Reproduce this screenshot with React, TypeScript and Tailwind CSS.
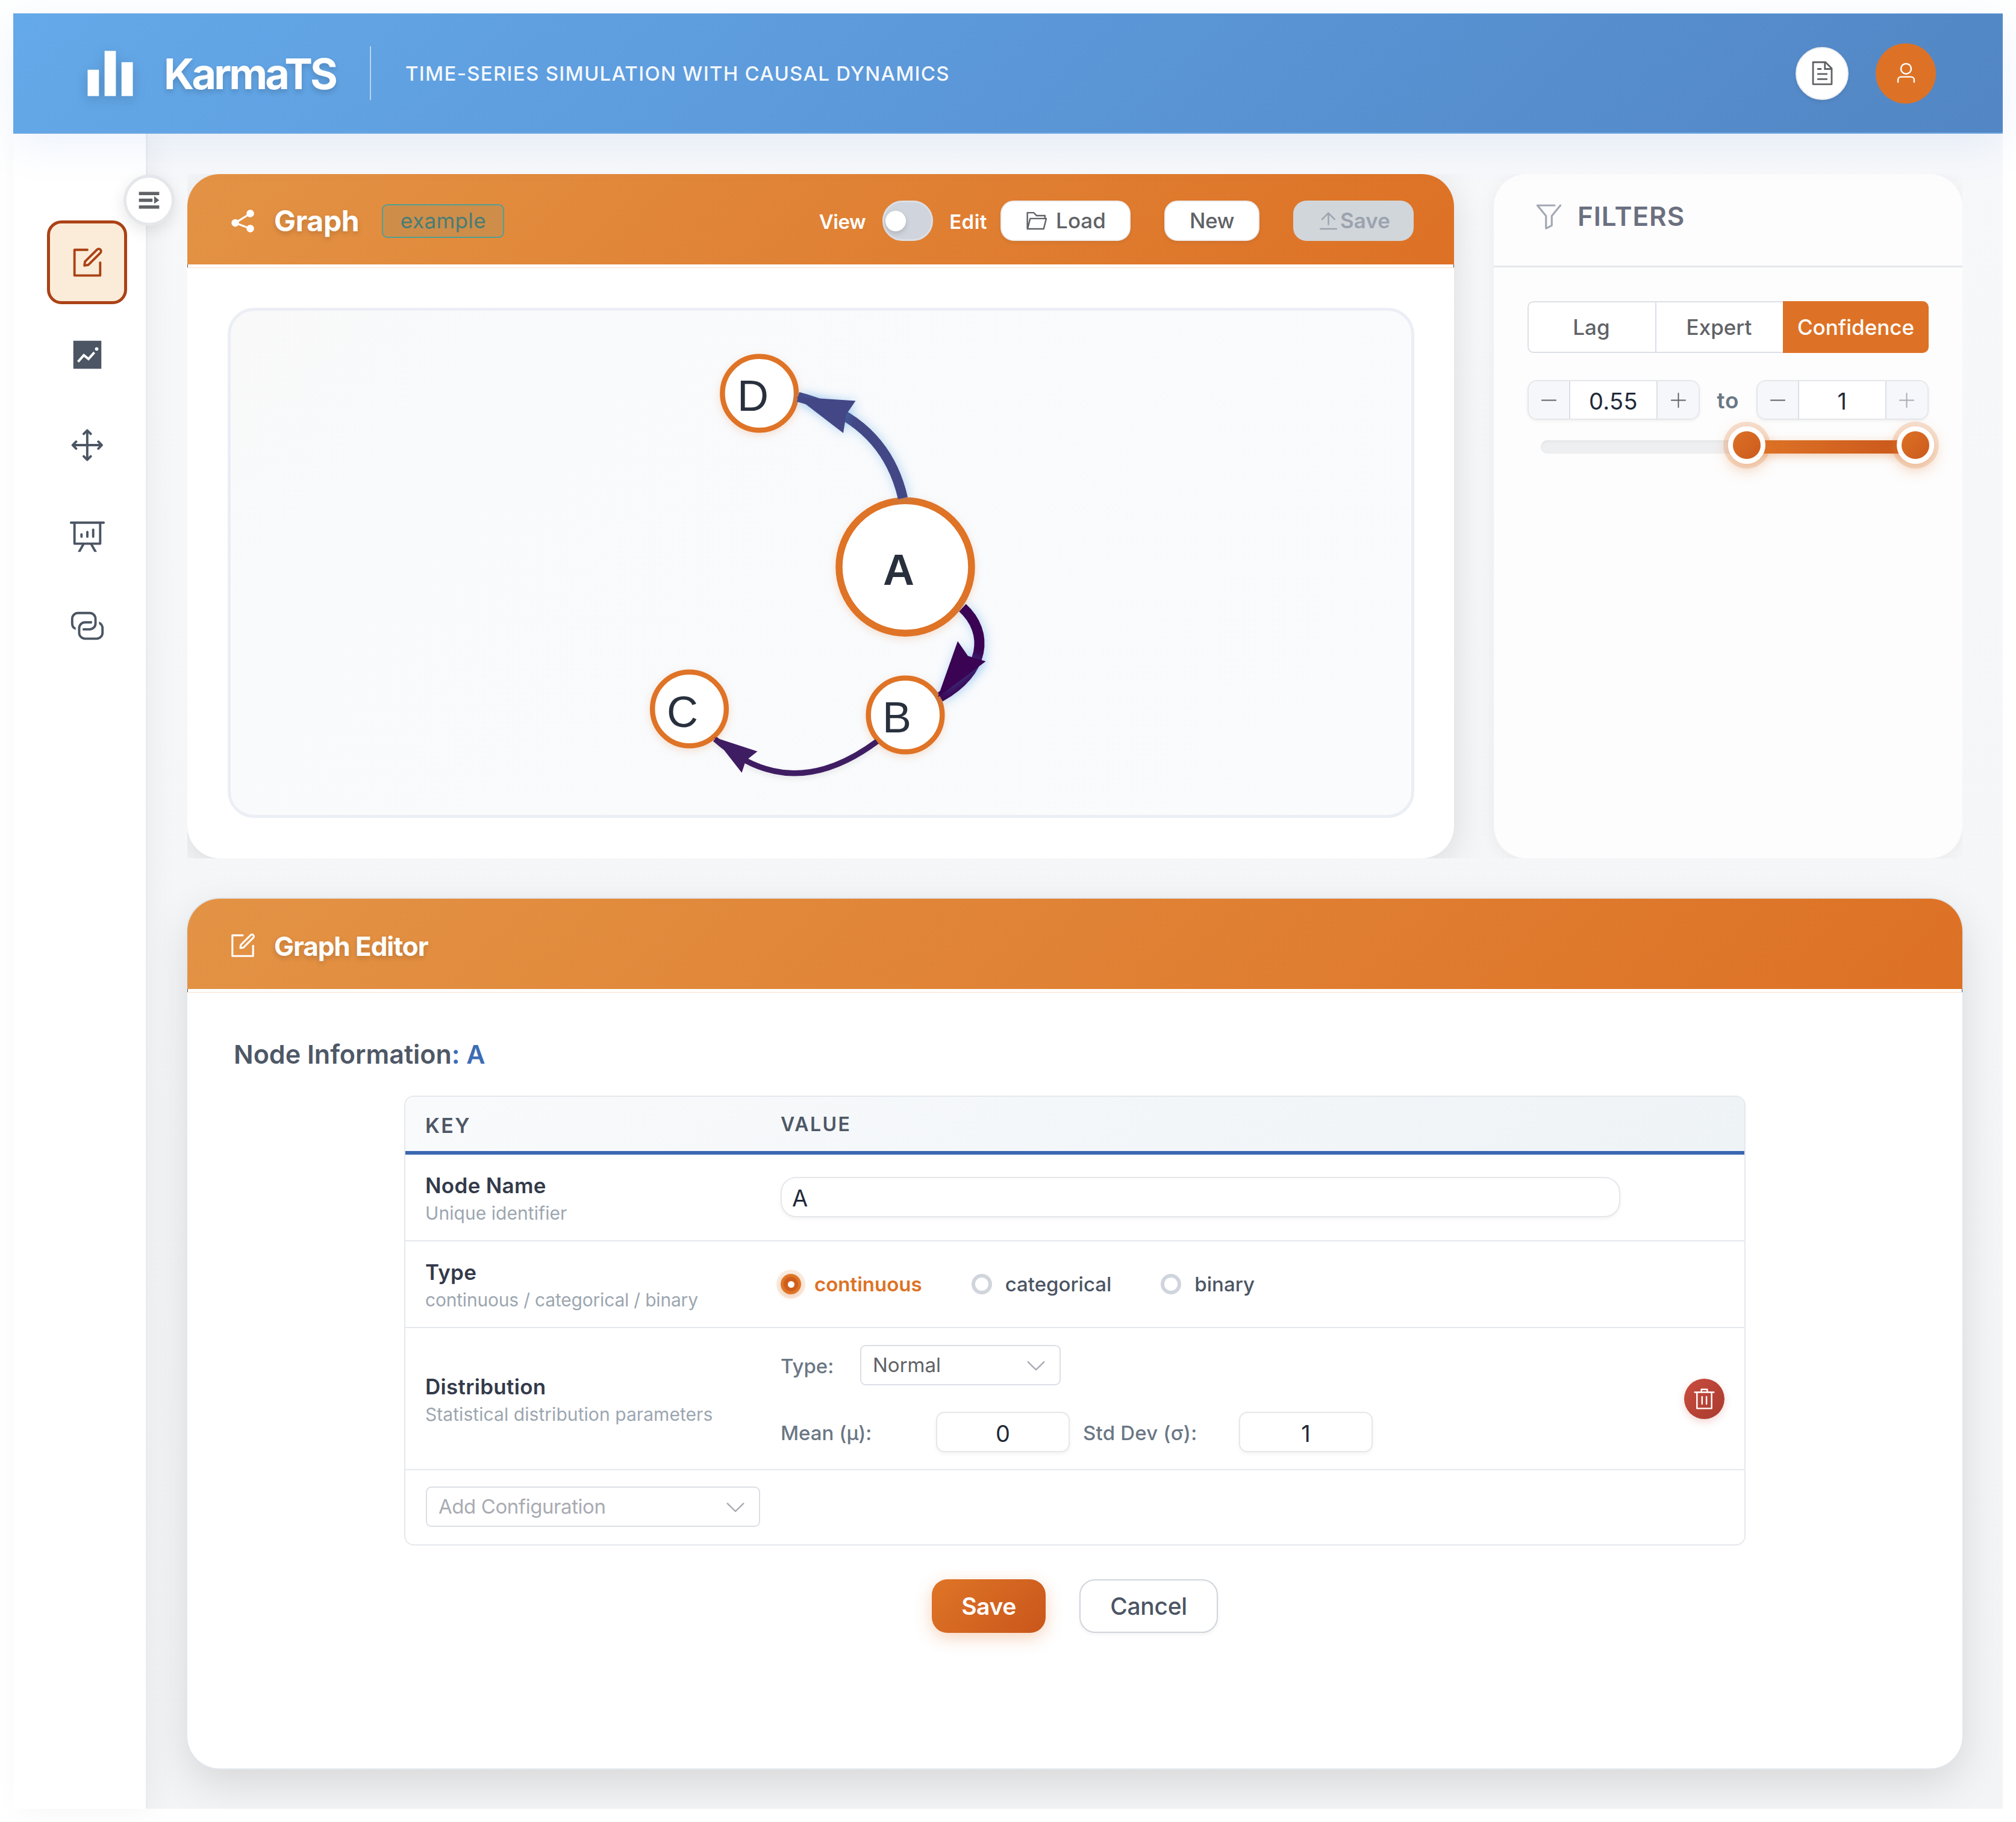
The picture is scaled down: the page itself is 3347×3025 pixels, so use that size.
import React, { useState } from "react";
import clsx from "clsx";

const ICONS = {
  histogram: ["M416 896V128h192v768H416zm-288 0V448h192v448H128zm576 0V320h192v576H704z"],
  document: [
    "M832 384H576V128H192v768h640V384zm-26.496-64L640 154.496V320h165.504zM160 64h480l256 256v608a32 32 0 0 1-32 32H160a32 32 0 0 1-32-32V96a32 32 0 0 1 32-32z",
    "M320 512h384v64H320v-64zm0-192h160v64H320v-64zm0 384h384v64H320v-64z",
  ],
  user: [
    "M512 512a192 192 0 1 0 0-384 192 192 0 0 0 0 384zm0 64a256 256 0 1 1 0-512 256 256 0 0 1 0 512zm320 320v-96a96 96 0 0 0-96-96H288a96 96 0 0 0-96 96v96a32 32 0 1 1-64 0v-96a160 160 0 0 1 160-160h448a160 160 0 0 1 160 160v96a32 32 0 1 1-64 0z",
  ],
  expand: ["M128 192h768v128H128V192zm0 256h512v128H128V448zm0 256h768v128H128V704zm576-352 192 160-192 128V352z"],
  edit: [
    "M832 512a32 32 0 1 1 64 0v352a32 32 0 0 1-32 32H160a32 32 0 0 1-32-32V160a32 32 0 0 1 32-32h352a32 32 0 0 1 0 64H192v640h640V512z",
    "m469.952 554.24 52.8-7.552L847.104 222.4a32 32 0 1 0-45.248-45.248L477.44 501.44l-7.552 52.8zm422.4-422.4a96 96 0 0 1 0 135.808l-331.84 331.84a32 32 0 0 1-18.112 9.088L436.8 623.68a32 32 0 0 1-36.224-36.224l15.104-105.6a32 32 0 0 1 9.024-18.112l331.904-331.84a96 96 0 0 1 135.808 0z",
  ],
  trend: [
    "M128 896V128h768v768H128zm291.712-327.296 128 102.4 180.16-201.792-47.744-42.624-139.84 156.608-128-102.4-180.16 201.792 47.744 42.624 139.84-156.608zM816 352a48 48 0 1 0-96 0 48 48 0 0 0 96 0z",
  ],
  rank: [
    "m186.496 544 41.408 41.344a32 32 0 1 1-45.248 45.312l-96-96a32 32 0 0 1 0-45.312l96-96a32 32 0 1 1 45.248 45.312L186.496 480h290.816V186.432l-41.472 41.472a32 32 0 1 1-45.248-45.184l96-96.128a32 32 0 0 1 45.312 0l96 96.064a32 32 0 0 1-45.248 45.184l-41.344-41.28V480H832l-41.344-41.344a32 32 0 0 1 45.248-45.312l96 96a32 32 0 0 1 0 45.312l-96 96a32 32 0 0 1-45.248-45.312L832 544H541.312v293.44l41.344-41.28a32 32 0 1 1 45.248 45.248l-96 96a32 32 0 0 1-45.312 0l-96-96a32 32 0 1 1 45.312-45.248l41.408 41.408V544H186.496z",
  ],
  analysis: [
    "m665.216 768 110.848 192h-73.856L591.36 768H433.024L322.176 960H248.32l110.848-192H160a32 32 0 0 1-32-32V192H64a32 32 0 0 1 0-64h896a32 32 0 1 1 0 64h-64v544a32 32 0 0 1-32 32H665.216zM832 192H192v512h640V192zM352 448a32 32 0 0 1 32 32v64a32 32 0 0 1-64 0v-64a32 32 0 0 1 32-32zm160-64a32 32 0 0 1 32 32v128a32 32 0 0 1-64 0V416a32 32 0 0 1 32-32zm160-64a32 32 0 0 1 32 32v192a32 32 0 1 1-64 0V352a32 32 0 0 1 32-32z",
  ],
  connection: [
    "M640 384v64H448a128 128 0 0 0-128 128v128a128 128 0 0 0 128 128h320a128 128 0 0 0 128-128V576a128 128 0 0 0-64-110.848V394.88c74.56 26.368 128 97.472 128 181.056v128a192 192 0 0 1-192 192H448a192 192 0 0 1-192-192V576a192 192 0 0 1 192-192h192z",
    "M384 640v-64h192a128 128 0 0 0 128-128V320a128 128 0 0 0-128-128H256a128 128 0 0 0-128 128v128a128 128 0 0 0 64 110.848v70.272A192.064 192.064 0 0 1 64 448V320a192 192 0 0 1 192-192h320a192 192 0 0 1 192 192v128a192 192 0 0 1-192 192H384z",
  ],
  share: [
    "m679.872 348.8-301.76 188.608a127.808 127.808 0 0 1 5.12 52.16l279.936 104.96a128 128 0 1 1-22.464 59.904l-279.872-104.96a128 128 0 1 1-16.64-166.272l301.696-188.608a128 128 0 1 1 33.92 54.272z",
  ],
  folder: [
    "M878.08 448H241.92l-96 384h636.16l96-384zM832 384v-64H485.76L357.504 192H128v448l57.92-231.744A32 32 0 0 1 216.96 384H832zm-24.96 512H96a32 32 0 0 1-32-32V160a32 32 0 0 1 32-32h287.872l128.384 128H864a32 32 0 0 1 32 32v96h23.04a32 32 0 0 1 31.04 39.744l-112 448A32 32 0 0 1 807.04 896z",
  ],
  upload: [
    "M160 832h704a32 32 0 1 1 0 64H160a32 32 0 1 1 0-64zm384-578.304V704h-64V247.296L237.248 490.048 192 444.8 508.8 128l316.8 316.8-45.312 45.248L544 253.696z",
  ],
  filter: [
    "M384 523.392V928a32 32 0 0 0 46.336 28.608l192-96A32 32 0 0 0 640 832V523.392l280.768-343.104a32 32 0 1 0-49.536-40.576l-288 352A32 32 0 0 0 576 512v300.224l-128 64V512a32 32 0 0 0-7.232-20.288L195.52 192H704a32 32 0 1 0 0-64H128a32 32 0 0 0-24.768 52.288L384 523.392z",
  ],
  minus: ["M128 544h768a32 32 0 1 0 0-64H128a32 32 0 0 0 0 64z"],
  plus: [
    "M480 480V128a32 32 0 0 1 64 0v352h352a32 32 0 1 1 0 64H544v352a32 32 0 1 1-64 0V544H128a32 32 0 0 1 0-64h352z",
  ],
  arrowDown: [
    "M831.872 340.864 512 652.672 192.128 340.864a30.592 30.592 0 0 0-42.752 0 29.12 29.12 0 0 0 0 41.6L489.664 714.24a32 32 0 0 0 44.672 0l340.288-331.712a29.12 29.12 0 0 0 0-41.728 30.592 30.592 0 0 0-42.752 0z",
  ],
  trash: [
    "M160 256H96a32 32 0 0 1 0-64h256V95.936a32 32 0 0 1 32-32h256a32 32 0 0 1 32 32V192h256a32 32 0 1 1 0 64h-64v672a32 32 0 0 1-32 32H192a32 32 0 0 1-32-32V256zm448-64v-64H416v64h192zM224 896h576V256H224v640zm192-128a32 32 0 0 1-32-32V416a32 32 0 0 1 64 0v320a32 32 0 0 1-32 32zm192 0a32 32 0 0 1-32-32V416a32 32 0 0 1 64 0v320a32 32 0 0 1-32 32z",
  ],
};

type IconName = keyof typeof ICONS;

function Icon({ name, className }: { name: IconName; className?: string }) {
  return (
    <svg viewBox="0 0 1024 1024" fill="currentColor" className={clsx("shrink-0", className)}>
      {ICONS[name].map((d) => (
        <path key={d} d={d} />
      ))}
    </svg>
  );
}

function AppHeader() {
  return (
    <header className="relative z-20 flex h-[200px] shrink-0 items-center border-t border-b-2 border-t-[#86b7e6] border-b-[#6fa8e2] bg-linear-[135deg,#64a9e9_0%,#5b97d8_50%,#5286c4_100%] px-[111px] shadow-[0_18px_70px_rgba(66,130,225,0.1)]">
      <Icon name="histogram" className="size-[100px] text-white drop-shadow-[0_6px_10px_rgba(0,0,0,0.16)]" />
      <h1 className="ml-[39px] w-[289px] pt-[3px] text-[70px] leading-none font-bold tracking-[-3.88px] whitespace-nowrap text-white [text-shadow:0_5px_10px_rgba(0,0,0,0.16)]">
        KarmaTS
      </h1>
      <div className="ml-[53px] h-[89px] w-[2px] bg-white/55" />
      <p className="ml-[57px] pt-[1px] text-[33px] leading-none font-medium tracking-[1.27px] whitespace-nowrap text-white/95">
        TIME-SERIES SIMULATION WITH CAUSAL DYNAMICS
      </p>
      <div className="ml-auto flex items-center gap-[45px]">
        <button className="flex size-[88px] items-center justify-center rounded-full border-2 border-[#ececee] bg-white text-[#606266] shadow-[0_3px_6px_rgba(0,0,0,0.08)]">
          <Icon name="document" className="size-[45px]" />
        </button>
        <button className="flex size-[100px] items-center justify-center rounded-full bg-[#dd7226] text-white">
          <Icon name="user" className="size-[39px]" />
        </button>
      </div>
    </header>
  );
}

const NAV: IconName[] = ["edit", "trend", "rank", "analysis", "connection"];

function Sidebar() {
  return (
    <aside className="relative z-10 flex w-[223px] shrink-0 flex-col items-center border-r-[3px] border-[#eaecf1] bg-white pt-[144px] pl-[25px] shadow-[9px_0_44px_rgba(0,0,0,0.045)]">
      <button className="absolute top-[68px] right-[-48px] flex size-[85px] items-center justify-center rounded-full border-[5px] border-[#e5e7eb] bg-white text-[#606266] shadow-[0_8px_26px_rgba(0,0,0,0.1)]">
        <Icon name="expand" className="size-[45px]" />
      </button>
      <nav className="flex flex-col gap-[11px]">
        {NAV.map((name, i) => (
          <button
            key={name}
            className={clsx(
              "flex h-[139px] w-[133px] items-center justify-center rounded-[24px]",
              i === 0
                ? "mb-[3px] border-[5px] border-[#ab4216] bg-[#faecd8] text-[#ab4216]"
                : "text-[#4b5563]"
            )}
          >
            <Icon name={name} className="size-[62px]" />
          </button>
        ))}
      </nav>
    </aside>
  );
}

function CardHeader({ icon, children }: { icon: IconName; children: React.ReactNode }) {
  return (
    <>
      <div className="flex h-[150px] shrink-0 items-center bg-linear-[135deg,#e39345_0%,#dd7125_100%] pt-[5px] pr-[67px] pl-[67px] text-white">
        <Icon name={icon} className="size-[50px]" />
        {children}
      </div>
      {/* sliver under the bar, with the dark ticks at both ends */}
      <div className="h-[5px] shrink-0 border-x border-[#5a5048] bg-white" />
      <div className="h-px shrink-0 bg-[#f8dfc9]" />
    </>
  );
}

type NodeProps = { x: number; y: number; r: number; w: number; label: string; tx: number; ty: number; bold?: boolean };

function Node({ x, y, r, w, label, tx, ty, bold }: NodeProps) {
  return (
    <g>
      <circle
        cx={x}
        cy={y}
        r={r}
        strokeWidth={w}
        className="fill-white stroke-[#df7326] drop-shadow-[0_4px_7px_rgba(223,115,38,0.2)]"
      />
      <text x={tx} y={ty} className={clsx("fill-[#29303d] font-['Liberation_Sans',Arial,sans-serif] text-[72px]", bold && "font-bold")}>
        {label}
      </text>
    </g>
  );
}

function GraphCanvas() {
  const glow = "drop-shadow-[2px_1px_9px_rgba(66,153,225,0.38)]";
  return (
    <div className="h-[847px] overflow-hidden rounded-[44px] border-[5px] border-[#ebeef4] bg-linear-[135deg,#f9f9f9_0%,#f9fafc_20%,#f9fbfd_100%]">
      <svg viewBox="383 516 1960 837" className="h-[837px] w-[1960px]">
        <Node x={1260.7} y={653} r={61.3} w={8.5} label="D" tx={1224} ty={682} />
        <Node x={1144.5} y={1177} r={61.3} w={8.5} label="C" tx={1107} ty={1206.5} />
        <Node x={1503} y={1187} r={61.3} w={8.5} label="B" tx={1465} ty={1216} />
        <Node x={1503} y={941.2} r={110} w={11.5} label="A" tx={1466} ty={971} bold />

        {/* A -> D */}
        <path className={glow} d="M1499 827C1481 749 1430 686 1325 659" fill="none" stroke="#434785" strokeWidth={16.5} />
        <path className={glow} d="M1322 659L1420.5 665.5L1405 688L1400 719Z" fill="#434785" />

        {/* A -> B */}
        <path className={glow} d="M1598 1009C1643 1050 1636 1116 1561 1157" fill="none" stroke="#3a0353" strokeWidth={17} />
        <path className={glow} d="M1557 1157.5L1590 1064.5L1607 1089L1636.5 1098Z" fill="#3a0353" />

        {/* B -> C */}
        <path
          className="drop-shadow-[0_4px_5px_rgba(0,0,0,0.08)]"
          d="M1456 1231C1360 1302 1272 1302 1187 1227"
          fill="none"
          stroke="#3f1d62"
          strokeWidth={9.5}
        />
        <path d="M1185.5 1224L1257.5 1247.5L1238 1263L1231.5 1283Z" fill="#3f1d62" />
      </svg>
    </div>
  );
}

function GraphCard() {
  return (
    <section className="flex h-full w-[2103px] shrink-0 flex-col overflow-hidden rounded-[54px] bg-white shadow-[0_12px_60px_rgba(0,0,0,0.12)]">
      <CardHeader icon="share">
        <h2 className="ml-[27px] text-[48px] leading-none font-bold tracking-[-0.3px] [text-shadow:0_4px_8px_rgba(0,0,0,0.16)]">Graph</h2>
        <span className="ml-[38px] flex h-[56px] w-[203px] items-center justify-center rounded-[9px] border-[2.5px] border-[#4fa095] bg-[#cf8d4a] text-[35px] leading-none tracking-[0.4px] text-[#467d75]">
          example
        </span>
        <span className="ml-auto pt-[4px] text-[33px] leading-none font-semibold tracking-[-0.5px]">View</span>
        <span className="ml-[28px] flex h-[67px] w-[84px] items-center rounded-[33px] border-[3px] border-[#dcdfe6] bg-[#d0d4dc] pl-[2px]">
          <span className="size-[34px] rounded-full bg-white shadow-[0_4px_8px_rgba(0,0,0,0.15)]" />
        </span>
        <span className="ml-[27px] pt-[4px] text-[33px] leading-none font-semibold tracking-[0.5px]">Edit</span>
        <button className="ml-[22px] flex h-[67px] w-[216px] items-center justify-center gap-[12px] rounded-[22px] border-2 border-[#ececee] bg-white text-[35px] leading-none font-medium text-[#606266] shadow-[0_3px_6px_rgba(0,0,0,0.06)]">
          <Icon name="folder" className="size-[39px]" />
          Load
        </button>
        <button className="ml-[56px] flex h-[67px] w-[158px] items-center justify-center rounded-[22px] border-2 border-[#ececee] bg-white text-[35px] leading-none font-medium tracking-[-0.5px] text-[#606266] shadow-[0_3px_6px_rgba(0,0,0,0.06)]">
          New
        </button>
        <button className="ml-[56px] flex h-[67px] w-[200px] items-center justify-center rounded-[22px] bg-[#d1d6da] text-[35px] leading-none font-semibold text-[#9ca3af]">
          <Icon name="upload" className="size-[39px]" />
          Save
        </button>
      </CardHeader>
      <div className="pt-[66px] pr-[66px] pl-[67px]">
        <GraphCanvas />
      </div>
    </section>
  );
}

function NumberBox({ value, maxed }: { value: string; maxed?: boolean }) {
  return (
    <div className="flex h-[66px] w-[286px] overflow-hidden rounded-[16px] border-[2.5px] border-[#e5e7eb] bg-white shadow-[0_2px_5px_rgba(0,0,0,0.06)]">
      <button className="flex w-[69px] items-center justify-center border-r-2 border-[#dcdfe6] bg-[#f5f7fa] text-[#606266]">
        <Icon name="minus" className="size-[31px]" />
      </button>
      <span className="flex flex-1 items-center justify-center pt-[4px] text-[38px] leading-none tracking-[0.4px] text-[#1f2937]">{value}</span>
      <button
        className={clsx(
          "flex w-[70px] items-center justify-center border-l-2 border-[#dcdfe6] bg-[#f5f7fa]",
          maxed ? "text-[#a8abb2]" : "text-[#606266]"
        )}
      >
        <Icon name="plus" className="size-[31px]" />
      </button>
    </div>
  );
}

function Knob({ at }: { at: number }) {
  return (
    <span
      className="absolute top-[-23px] size-[62px] -translate-x-1/2 rounded-full border-[8px] border-white bg-linear-[135deg,#df7527,#c9561b] bg-origin-border shadow-[0_0_0_8px_rgba(221,114,38,0.2),0_8px_26px_rgba(221,114,38,0.4)]"
      style={{ left: `${at * 100}%` }}
    />
  );
}

function Filters() {
  const [tab, setTab] = useState("Confidence");
  const [min, max] = [0.55, 1];
  return (
    <section className="h-full w-[778px] shrink-0 overflow-hidden rounded-[54px] bg-[#fdfdfd] shadow-[0_4px_30px_rgba(0,0,0,0.06)]">
      <div className="flex h-[155px] items-center border-b-[3px] border-[#e6e7ec] pb-[13px] pl-[66px]">
        <Icon name="filter" className="size-[51px] text-[#a3a8b5]" />
        <h2 className="ml-[22px] text-[44px] leading-none font-semibold tracking-[0.9px] text-[#6b7080]">FILTERS</h2>
      </div>
      <div className="pt-[56px] pr-[56px] pl-[56px]">
        <div className="flex h-[86px] text-[35px] leading-none font-medium">
          {["Lag", "Expert", "Confidence"].map((t) => (
            <button
              key={t}
              onClick={() => setTab(t)}
              className={clsx(
                "h-full first:rounded-l-[10px] last:rounded-r-[10px]",
                t === "Confidence" ? "w-[242px]" : "w-[212px] border-y-[2.5px] border-l-[2.5px] pr-[2px]",
                tab === t ? "bg-[#dd7226] text-white" : "border-[#dcdfe6] bg-white text-[#606266]"
              )}
            >
              {t}
            </button>
          ))}
        </div>
        <div className="mt-[45px] flex items-center justify-between">
          <NumberBox value={String(min)} />
          <span className="text-[37px] leading-none font-semibold tracking-[1px] text-[#6b7785]">to</span>
          <NumberBox value={String(max)} maxed />
        </div>
        <div className="relative mt-[34px] ml-[22px] h-[22px] w-[622px] rounded-full bg-[#eeeff1] shadow-[inset_0_2px_5px_rgba(0,0,0,0.05)]">
          <div
            className="absolute inset-y-0 bg-linear-to-r from-[#df7527] to-[#c9561b] shadow-[0_4px_16px_rgba(221,114,38,0.35)]"
            style={{ left: `${min * 100}%`, right: `${(1 - max) * 100}%` }}
          />
          <Knob at={min} />
          <Knob at={max} />
        </div>
      </div>
    </section>
  );
}

function KeyCell({ title, hint, tight }: { title: string; hint: string; tight?: boolean }) {
  return (
    <div className="w-[623px] shrink-0 pt-[4px] pl-[33px]">
      <div className="text-[35px] leading-[48px] font-semibold tracking-[0.3px] text-[#333a4a]">{title}</div>
      <div className={clsx("text-[30px] leading-[44px] text-[#9ca6b0]", tight ? "tracking-[-0.2px]" : "tracking-[0.06px]")}>{hint}</div>
    </div>
  );
}

function SelectBox({ label, className }: { label: string; className?: string }) {
  return (
    <div className={clsx("flex h-[67px] items-center justify-between rounded-[9px] border-[2.5px] border-[#dcdfe6] bg-white pr-[19px] pl-[19px] text-[33px] leading-none", className)}>
      {label}
      <Icon name="arrowDown" className="size-[40px] text-[#a8abb2]" />
    </div>
  );
}

const TYPES = ["continuous", "categorical", "binary"];

function NodeTable() {
  const [type, setType] = useState("continuous");
  const field = "flex h-[67px] items-center border-[2.5px] border-[#e5e7eb] bg-white text-[38px] leading-none text-[#1f2937] shadow-[0_3px_6px_rgba(0,0,0,0.05)]";
  return (
    <div className="mx-auto mt-[47px] h-[747px] w-[2227px] overflow-hidden rounded-[16px] border-[2.5px] border-[#e5e8ed] bg-white">
      <div className="flex h-[96px] items-center border-b-[6px] border-[#3a67b1] bg-linear-[135deg,#f9fafc,#eef3f6] leading-none font-semibold text-[#4e5866]">
        <span className="w-[623px] pt-[5px] pl-[33px] text-[34px] tracking-[2.4px]">KEY</span>
        <span className="pt-[1px] text-[32px] tracking-[2.4px]">VALUE</span>
      </div>
      <div className="flex h-[144px] items-center border-b-[2.5px] border-[#e5e8ed]">
        <KeyCell title="Node Name" hint="Unique identifier" />
        <div className={clsx(field, "mb-[2px] w-[1394px] rounded-[26px] pt-[4px] pl-[17px]")}>A</div>
      </div>
      <div className="flex h-[144px] items-center border-b-[2.5px] border-[#e5e8ed]">
        <KeyCell title="Type" hint="continuous / categorical / binary" tight />
        <div className="flex items-center gap-[82px] text-[33px] leading-none">
          {TYPES.map((t) => (
            <button key={t} onClick={() => setType(t)} className="flex items-center gap-[22px]">
              <span
                className={clsx(
                  "flex size-[34px] items-center justify-center rounded-full",
                  t === type
                    ? "bg-[radial-gradient(#cf5d1c_45%,#df7527_55%)] shadow-[0_0_0_7px_rgba(221,114,38,0.15),0_4px_10px_rgba(221,114,38,0.2)]"
                    : "border-[6px] border-[#d0d4dc] bg-white"
                )}
              >
                {t === type && <span className="size-[11px] rounded-full bg-white" />}
              </span>
              <span className={t === type ? "font-semibold text-[#dd7226]" : "font-medium text-[#4b5563]"}>{t}</span>
            </button>
          ))}
        </div>
      </div>
      <div className="flex h-[236px] items-center border-b-[2.5px] border-[#e5e8ed]">
        <KeyCell title="Distribution" hint="Statistical distribution parameters" />
        <div className="flex flex-col gap-[44px] text-[33px] leading-none font-medium text-[#6b7785]">
          <div className="flex items-center">
            <span className="w-[132px] pt-[3px]">Type:</span>
            <SelectBox label="Normal" className="w-[333px] font-normal text-[#606266]" />
          </div>
          <div className="flex items-center">
            <span className="w-[258px] pt-[3px]">Mean (μ):</span>
            <div className={clsx(field, "w-[222px] justify-center rounded-[14px] pt-[4px] font-normal")}>0</div>
            <span className="ml-[22px] w-[259px] pt-[3px] tracking-[0.2px]">Std Dev (σ):</span>
            <div className={clsx(field, "w-[222px] justify-center rounded-[14px] pt-[4px] font-normal")}>1</div>
          </div>
        </div>
        <button className="mr-[33px] ml-auto flex size-[67px] items-center justify-center rounded-full bg-linear-[135deg,#c94d40,#a93a2e] text-white shadow-[0_5px_14px_rgba(192,57,43,0.2)]">
          <Icon name="trash" className="size-[39px]" />
        </button>
      </div>
      <div className="flex h-[121px] items-center pl-[34px]">
        <SelectBox label="Add Configuration" className="w-[555px] tracking-[-0.43px] text-[#a8abb2]" />
      </div>
    </div>
  );
}

function GraphEditor() {
  return (
    <section className="mt-[67px] flex h-[1444px] flex-col overflow-hidden rounded-[54px] bg-white shadow-[0_0_0_2px_#e1e7ee,0_24px_70px_rgba(0,0,0,0.12)]">
      <CardHeader icon="edit">
        <h2 className="ml-[27px] pt-[3px] text-[44px] leading-none font-bold tracking-[-1.07px] [text-shadow:0_4px_8px_rgba(0,0,0,0.16)]">Graph Editor</h2>
      </CardHeader>
      <h3 className="mt-[80px] pl-[77px] text-[43px] leading-[44px] font-semibold text-[#4e5866]">
        Node Information<span className="text-[#3d6cb4]">: A</span>
      </h3>
      <NodeTable />
      <div className="mt-[56px] flex justify-center gap-[56px] text-[39px] leading-none">
        <button className="h-[89px] w-[189px] rounded-[26px] bg-linear-[135deg,#df7527,#c9561b] font-semibold tracking-[-0.4px] text-white shadow-[0_8px_28px_rgba(221,114,38,0.3)]">
          Save
        </button>
        <button className="h-[89px] w-[230px] rounded-[26px] border-[2.5px] border-[#d1d5db] bg-white font-medium tracking-[-0.33px] text-[#4b5563] shadow-[0_3px_6px_rgba(0,0,0,0.05)]">
          Cancel
        </button>
      </div>
    </section>
  );
}

export default function App() {
  return (
    <div className="flex h-[3025px] w-[3347px] flex-col overflow-hidden bg-white p-[22px] font-[Inter,sans-serif]">
      <AppHeader />
      <div className="flex h-[2781px]">
        <Sidebar />
        <main className="w-[3080px] overflow-hidden bg-linear-to-b from-[#f7f8fa] to-[#f3f4f5] pr-[67px] pl-[66px]">
          {/* the row clips its cards' shadows */}
          <div className="mt-[67px] flex h-[1136px] gap-[66px] overflow-hidden">
            <GraphCard />
            <Filters />
          </div>
          <GraphEditor />
        </main>
      </div>
    </div>
  );
}
